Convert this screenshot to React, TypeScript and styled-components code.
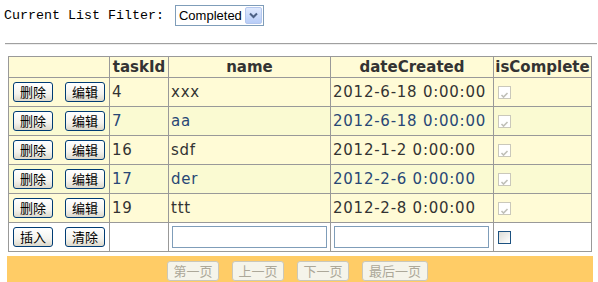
import React from "react";
import styled, { createGlobalStyle } from "styled-components";

const Global = createGlobalStyle`
  html, body { margin: 0; padding: 0; background: #fff; }
  body { font-family: "DejaVu Sans", Verdana, sans-serif; }
`;

const Page = styled.div`
  width: 598px;
  height: 282px;
  overflow: hidden;
`;

const FilterBar = styled.div`
  display: flex;
  align-items: center;
  height: 20px;
  padding: 5px 0 0 4px;
  font-family: "Liberation Mono", "Courier New", monospace;
  font-size: 13.33px;
  color: #000;
`;

const FakeSelect = styled.div`
  display: flex;
  align-items: center;
  box-sizing: border-box;
  width: 89px;
  height: 21px;
  margin-left: 11px;
  border: 1px solid #7f9db9;
  background: #fff;
  padding: 1px;
  font-family: "Liberation Sans", Arial, sans-serif;
  font-size: 13px;
  color: #000;
`;

const SelectText = styled.span`
  flex: 1;
  padding-left: 2px;
`;

const ArrowBox = styled.span`
  display: flex;
  align-items: center;
  justify-content: center;
  width: 17px;
  height: 17px;
  box-sizing: border-box;
  border: 1px solid #b4c7ee;
  border-radius: 2px;
  background: linear-gradient(#dfe9fd, #b8cdf8);
`;

const Rule = styled.div`
  margin: 18px 1px 0 5px;
  height: 1px;
  background: #a0a0a0;
  border-bottom: 1px solid #eeeeee;
`;

const Table = styled.table`
  margin: 11px 0 0 8px;
  border-collapse: collapse;
  table-layout: fixed;
  width: 584px;
  font-family: "DejaVu Sans", Verdana, sans-serif;
  font-size: 15px;
`;

const HeadRow = styled.tr`
  height: 21px;
  background: #fffbd6;
  color: #333333;
`;

const Th = styled.th`
  border: 1px solid #999999;
  padding: 0 1px;
  font-weight: bold;
  text-align: center;
  white-space: nowrap;
  line-height: 18px;
`;

const Row = styled.tr<{ $alt?: boolean; $insert?: boolean }>`
  height: 29px;
  background: ${(p) => (p.$insert ? "#ffffff" : p.$alt ? "#fafad2" : "#fffbd6")};
  color: ${(p) => (p.$alt ? "#284775" : "#333333")};
`;

const Td = styled.td`
  border: 1px solid #999999;
  padding: 0 2px;
  white-space: nowrap;
  vertical-align: middle;
  letter-spacing: 0.75px;
`;

const ActionCell = styled(Td)`
  padding: 0 0 0 4px;
  letter-spacing: 0;
`;

const ActionGroup = styled.div`
  display: flex;
  gap: 12px;
`;

const XpButton = styled.button`
  box-sizing: border-box;
  width: 40px;
  height: 20px;
  padding: 0;
  border: 1px solid #003c74;
  border-radius: 3px;
  background: linear-gradient(#ffffff 0%, #f4f3ee 60%, #dcd8cb 100%);
  font-family: "Noto Sans CJK SC", sans-serif;
  font-size: 13px;
  line-height: 18px;
  color: #000;
`;

const TextBox = styled.input`
  box-sizing: border-box;
  display: block;
  width: 155px;
  height: 22px;
  margin-left: 1px;
  border: 1px solid #7f9db9;
  padding: 0 2px;
  background: #fff;
`;

const Box = styled.span<{ $enabled?: boolean }>`
  display: block;
  box-sizing: border-box;
  width: 13px;
  height: 13px;
  margin-left: 2px;
  border: 1px solid ${(p) => (p.$enabled ? "#1c5180" : "#cac8bb")};
  background: ${(p) => (p.$enabled ? "linear-gradient(135deg, #dcdcd7, #ffffff)" : "#ffffff")};
`;

const Pager = styled.div`
  display: flex;
  justify-content: center;
  align-items: center;
  gap: 13px;
  margin: 4px 0 0 7px;
  width: 586px;
  height: 29px;
  padding-right: 5px;
  box-sizing: border-box;
  background: #ffcc66;
`;

const PagerButton = styled.button<{ $w: number }>`
  box-sizing: border-box;
  width: ${(p) => p.$w}px;
  height: 20px;
  padding: 0;
  border: 1px solid #cac8bb;
  border-radius: 3px;
  background: #f5f4ea;
  color: #aca899;
  font-family: "Noto Sans CJK SC", sans-serif;
  font-size: 13px;
  line-height: 18px;
`;

const rows = [
  { id: 4, name: "xxx", date: "2012-6-18 0:00:00" },
  { id: 7, name: "aa", date: "2012-6-18 0:00:00" },
  { id: 16, name: "sdf", date: "2012-1-2 0:00:00" },
  { id: 17, name: "der", date: "2012-2-6 0:00:00" },
  { id: 19, name: "ttt", date: "2012-2-8 0:00:00" },
];

const CheckMark = () => (
  <Box>
    <svg width="11" height="11" viewBox="0 0 11 11">
      <path d="M2.5 5 L4.5 7 L8.5 3" stroke="#c0c0b8" strokeWidth="1.6" fill="none" />
    </svg>
  </Box>
);

export default function App() {
  return (
    <Page>
      <Global />
      <FilterBar>
        <span>Current List Filter:</span>
        <FakeSelect>
          <SelectText>Completed</SelectText>
          <ArrowBox>
            <svg width="9" height="7" viewBox="0 0 9 7">
              <path d="M1 1.5 L4.5 5 L8 1.5" stroke="#4d6185" strokeWidth="2" fill="none" />
            </svg>
          </ArrowBox>
        </FakeSelect>
      </FilterBar>
      <Rule />
      <Table>
        <colgroup>
          <col style={{ width: 101 }} />
          <col style={{ width: 59 }} />
          <col style={{ width: 162 }} />
          <col style={{ width: 163 }} />
          <col style={{ width: 98 }} />
        </colgroup>
        <thead>
          <HeadRow>
            <Th></Th>
            <Th>taskId</Th>
            <Th>name</Th>
            <Th>dateCreated</Th>
            <Th>isComplete</Th>
          </HeadRow>
        </thead>
        <tbody>
          {rows.map((r, i) => (
            <Row key={r.id} $alt={i % 2 === 1}>
              <ActionCell>
                <ActionGroup>
                  <XpButton>删除</XpButton>
                  <XpButton>编辑</XpButton>
                </ActionGroup>
              </ActionCell>
              <Td>{r.id}</Td>
              <Td>{r.name}</Td>
              <Td>{r.date}</Td>
              <Td>
                <CheckMark />
              </Td>
            </Row>
          ))}
          <Row $insert>
            <ActionCell>
              <ActionGroup>
                <XpButton>插入</XpButton>
                <XpButton>清除</XpButton>
              </ActionGroup>
            </ActionCell>
            <Td></Td>
            <Td>
              <TextBox />
            </Td>
            <Td>
              <TextBox />
            </Td>
            <Td>
              <Box $enabled />
            </Td>
          </Row>
        </tbody>
      </Table>
      <Pager>
        <PagerButton $w={52} disabled>第一页</PagerButton>
        <PagerButton $w={52} disabled>上一页</PagerButton>
        <PagerButton $w={52} disabled>下一页</PagerButton>
        <PagerButton $w={66} disabled>最后一页</PagerButton>
      </Pager>
    </Page>
  );
}
